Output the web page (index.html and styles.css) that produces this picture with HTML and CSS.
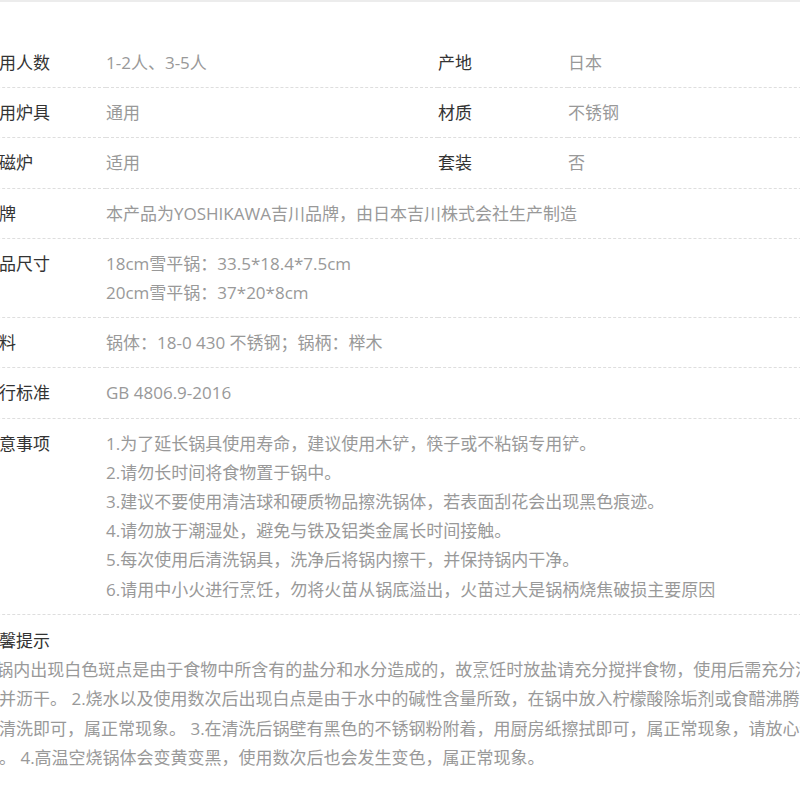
FILE: index.html
```html
<!DOCTYPE html>
<html lang="zh-CN">
<head>
    <meta charset="UTF-8">
    <meta name="viewport" content="width=device-width, initial-scale=1">
    <title>商品参数</title>
    <link rel="stylesheet" href="styles.css">
</head>
<body>
    <div class="params">
        <table class="param-table">
            <colgroup>
                <col class="col-label">
                <col class="col-value">
                <col class="col-label2">
                <col>
            </colgroup>
            <tbody>
                <tr>
                    <th>适用人数</th>
                    <td>1-2人、3-5人</td>
                    <th>产地</th>
                    <td>日本</td>
                </tr>
                <tr>
                    <th>适用炉具</th>
                    <td>通用</td>
                    <th>材质</th>
                    <td>不锈钢</td>
                </tr>
                <tr>
                    <th>电磁炉</th>
                    <td>适用</td>
                    <th>套装</th>
                    <td>否</td>
                </tr>
                <tr>
                    <th>品牌</th>
                    <td colspan="3">本产品为YOSHIKAWA吉川品牌，由日本吉川株式会社生产制造</td>
                </tr>
                <tr>
                    <th>产品尺寸</th>
                    <td colspan="3">18cm雪平锅：33.5*18.4*7.5cm<br>20cm雪平锅：37*20*8cm</td>
                </tr>
                <tr>
                    <th>材料</th>
                    <td colspan="3">锅体：18-0 430 不锈钢；锅柄：榉木</td>
                </tr>
                <tr>
                    <th>执行标准</th>
                    <td colspan="3">GB 4806.9-2016</td>
                </tr>
                <tr class="notes-row">
                    <th>注意事项</th>
                    <td colspan="3">
                        <div>1.为了延长锅具使用寿命，建议使用木铲，筷子或不粘锅专用铲。</div>
                        <div>2.请勿长时间将食物置于锅中。</div>
                        <div>3.建议不要使用清洁球和硬质物品擦洗锅体，若表面刮花会出现黑色痕迹。</div>
                        <div>4.请勿放于潮湿处，避免与铁及铝类金属长时间接触。</div>
                        <div>5.每次使用后清洗锅具，洗净后将锅内擦干，并保持锅内干净。</div>
                        <div>6.请用中小火进行烹饪，勿将火苗从锅底溢出，火苗过大是锅柄烧焦破损主要原因</div>
                    </td>
                </tr>
            </tbody>
        </table>

        <div class="tips">
            <h3>温馨提示</h3>
            <p>
                1.锅内出现白色斑点是由于食物中所含有的盐分和水分造成的，故烹饪时放盐请充分搅拌食物，使用后需充分清<br>
                洗并沥干。 2.烧水以及使用数次后出现白点是由于水中的碱性含量所致，在锅中放入柠檬酸除垢剂或食醋沸腾<br>
                后清洗即可，属正常现象。 3.在清洗后锅壁有黑色的不锈钢粉附着，用厨房纸擦拭即可，属正常现象，请放心使<br>
                用。 4.高温空烧锅体会变黄变黑，使用数次后也会发生变色，属正常现象。
            </p>
        </div>
    </div>
</body>
</html>
```

FILE: styles.css
```css
html, body {
    margin: 0;
    overflow: hidden;
}
body {
    font-family: "Open Sans", "Noto Sans CJK SC", sans-serif;
    font-size: 17px;
    color: #333;
    background: #fff;
    border-top: 2px solid #ececec;
}
.params {
    width: 860px;
    margin-left: -18px;
    padding-top: 36px;
}
.param-table {
    width: 100%;
    border-collapse: collapse;
    table-layout: fixed;
}
.col-label {
    width: 124px;
}
.col-value {
    width: 332px;
}
.col-label2 {
    width: 130px;
}
.param-table th,
.param-table td {
    padding: 10px 0;
    line-height: 29.2px;
    text-align: left;
    vertical-align: top;
    border-bottom: 1px dashed #dedede;
    white-space: nowrap;
}
.param-table th {
    font-weight: 400;
    color: #333;
}
.param-table td {
    color: #999;
}
.notes-row td {
    padding-bottom: 10px;
}
.tips {
    padding-top: 11px;
}
.tips h3 {
    margin: 0;
    font-size: 17px;
    font-weight: 400;
    line-height: 29.3px;
    color: #333;
}
.tips p {
    margin: 0;
    line-height: 29.3px;
    color: #999;
    white-space: nowrap;
}
```
